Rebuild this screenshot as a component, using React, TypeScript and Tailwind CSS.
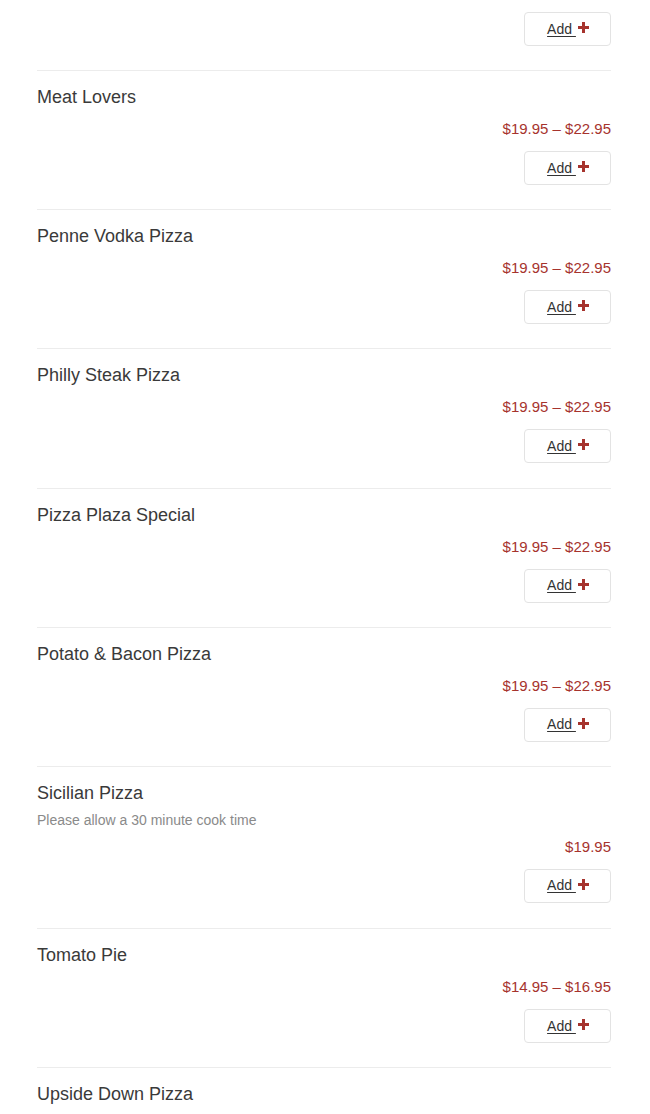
import React from 'react';

type Item = {
  name: string;
  price?: string;
  note?: string;
};

const items: Item[] = [
  { name: 'Meat Lovers', price: '$19.95 – $22.95' },
  { name: 'Penne Vodka Pizza', price: '$19.95 – $22.95' },
  { name: 'Philly Steak Pizza', price: '$19.95 – $22.95' },
  { name: 'Pizza Plaza Special', price: '$19.95 – $22.95' },
  { name: 'Potato & Bacon Pizza', price: '$19.95 – $22.95' },
  { name: 'Sicilian Pizza', price: '$19.95', note: 'Please allow a 30 minute cook time' },
  { name: 'Tomato Pie', price: '$14.95 – $16.95' },
];

const PlusIcon = () => (
  <svg width="11" height="11" viewBox="0 0 11 11" className="ml-[2px] inline-block -mt-[3px] align-middle">
    <path d="M4 0h3v4h4v3H7v4H4V7H0V4h4z" fill="#a6332d" />
  </svg>
);

const AddButton = () => (
  <div className="flex justify-end">
    <button className="flex h-[34px] w-[87px] items-center justify-center rounded-[4px] border border-[#e3e3e3] bg-white pl-[1px] text-[14px] text-[#333]">
      <span className="underline underline-offset-[2px]">Add&nbsp;</span>
      <PlusIcon />
    </button>
  </div>
);

const MenuItem: React.FC<{ item: Item }> = ({ item }) => (
  <div className={`border-t border-[#ececec] pt-[13px] ${item.note ? 'pb-[25.2px]' : 'pb-[24.2px]'}`}>
    <h3 className="text-[18px] leading-[27px] text-[#3a3a3a]">{item.name}</h3>
    {item.note && (
      <p className="mt-[3px] text-[14px] leading-[21px] text-[#8a8a8a]">{item.note}</p>
    )}
    <div className={`${item.note ? 'mt-[5px]' : 'mt-[7px]'} text-right text-[15px] leading-[22px] text-[#a6332d]`}>
      {item.price}
    </div>
    <div className="mt-[11px]">
      <AddButton />
    </div>
  </div>
);

export default function App() {
  return (
    <div className="min-h-screen bg-white pl-[37px] pr-[39px]" style={{ fontFamily: '"Liberation Sans", Arial, sans-serif' }}>
      {/* tail of the previous item, scrolled off the top */}
      <div className="pt-[12px] pb-[24px]">
        <AddButton />
      </div>
      {items.map((item) => (
        <MenuItem key={item.name} item={item} />
      ))}
      {/* next item, cut by the bottom of the window */}
      <div className="border-t border-[#ececec] pt-[13px] pb-[20px]">
        <h3 className="text-[18px] leading-[27px] text-[#3a3a3a]">Upside Down Pizza</h3>
      </div>
    </div>
  );
}
